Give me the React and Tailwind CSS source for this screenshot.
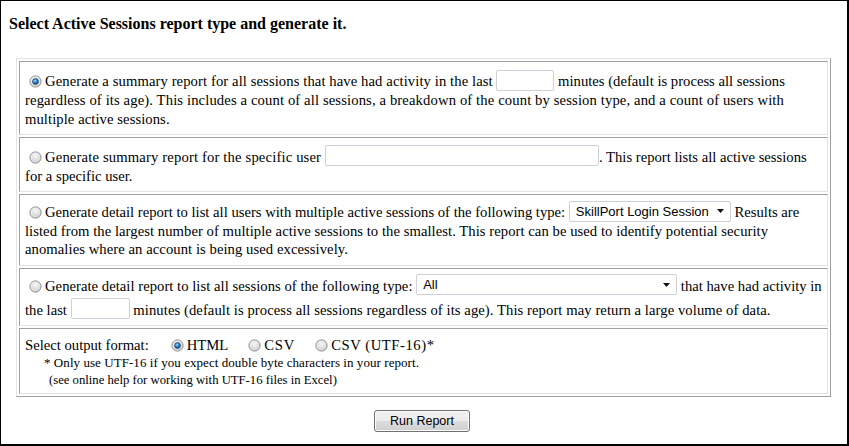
import React from "react";

function Radio({ checked, className }) {
  return (
    <svg width="13" height="13" viewBox="0 0 13 13" className={className}>
      <defs>
        <radialGradient id="rgFill" cx="0.4" cy="0.35" r="0.75">
          <stop offset="0%" stopColor="#ffffff" />
          <stop offset="55%" stopColor="#e9e9e9" />
          <stop offset="100%" stopColor="#c9c9c9" />
        </radialGradient>
        <radialGradient id="rgIn" cx="0.5" cy="0.3" r="0.8">
          <stop offset="0%" stopColor="#f7f7f7" />
          <stop offset="100%" stopColor="#d2d2d2" />
        </radialGradient>
        <radialGradient id="rgDot" cx="0.4" cy="0.35" r="0.7">
          <stop offset="0%" stopColor="#9fdcff" />
          <stop offset="50%" stopColor="#2d86d2" />
          <stop offset="100%" stopColor="#154a86" />
        </radialGradient>
      </defs>
      <circle cx="6.5" cy="6.5" r="5.6" fill="url(#rgFill)" stroke="#8d8d8d" strokeWidth="1" />
      <circle cx="6.5" cy="6.5" r="3.9" fill="url(#rgIn)" />
      {checked && (
        <circle cx="6.5" cy="6.5" r="2.9" fill="url(#rgDot)" stroke="#1d3f69" strokeWidth="0.8" />
      )}
    </svg>
  );
}

function Select({ label, w }) {
  return (
    <span
      className={
        "inline-flex items-center justify-between h-[21px] mb-[3px] border border-[#cdd1d8] rounded-[2px] bg-white pl-[6px] pr-[6px] font-['Liberation_Sans',Arial,sans-serif] text-[13px] leading-[15px] text-black shrink-0 " +
        w
      }
    >
      <span>{label}</span>
      <svg width="7" height="4" viewBox="0 0 7 4">
        <path d="M0 0 L7 0 L3.5 4 Z" fill="#111" />
      </svg>
    </span>
  );
}

function TextBox({ w }) {
  return (
    <input
      type="text"
      readOnly
      className={
        "h-[21px] mb-[3px] border border-[#cdd1d8] rounded-[2px] bg-white shrink-0 outline-none " + w
      }
    />
  );
}

const cell =
  "border border-[#e3e3e3] border-t-[#a0a0a0] border-l-[#a0a0a0] pl-[5px] pr-[5px]";
const line = "flex items-center whitespace-pre";

export default function App() {
  return (
    <div className="w-[849px] h-[446px] bg-white border-l border-t border-r-2 border-b-2 border-black font-['Liberation_Serif','Times_New_Roman',serif] text-black overflow-hidden">
      <div className="pt-[13px] pl-[8px] h-[32px] text-[16px] font-bold leading-[19px]">
        Select Active Sessions report type and generate it.
      </div>

      <div className="ml-[15px] mt-[25px] w-[815px] border border-[#a0a0a0] border-t-[#e3e3e3] border-l-[#e3e3e3] p-[2px] flex flex-col gap-[2px] text-[14.67px] leading-[19px]">
        {/* Row 1 */}
        <div className={cell + " h-[74px] pt-[10px]"}>
          <div className={line + " h-[19px]"}>
            <Radio checked className="shrink-0 ml-[4px] mr-[3px]" />
            <span className="tracking-[0.09px]">
              {"Generate a summary report for all sessions that have had activity in the last "}
            </span>
            <TextBox w="w-[58px]" />
            {" minutes (default is process all sessions"}
          </div>
          <div className={line + " h-[19px] tracking-[0.12px]"}>
            regardless of its age). This includes a count of all sessions, a breakdown of the count by session type, and a count of users with
          </div>
          <div className={line + " h-[19px] tracking-[0.07px]"}>multiple active sessions.</div>
        </div>

        {/* Row 2 */}
        <div className={cell + " h-[55px] pt-[9px]"}>
          <div className={line + " h-[20px]"}>
            <Radio className="shrink-0 ml-[4px] mr-[3px]" />
            <span className="tracking-[0.15px]">{"Generate summary report for the specific user "}</span>
            <TextBox w="w-[274px]" />
            {". This report lists all active sessions"}
          </div>
          <div className={line + " h-[19px]"}>for a specific user.</div>
        </div>

        {/* Row 3 */}
        <div className={cell + " h-[72px] pt-[8px]"}>
          <div className={line + " h-[19px]"}>
            <Radio className="shrink-0 ml-[4px] mr-[3px]" />
            {"Generate detail report to list all users with multiple active sessions of the following type: "}
            <Select label="SkillPort Login Session" w="w-[162px]" />
            {" Results are"}
          </div>
          <div className={line + " h-[18px] tracking-[0.05px]"}>
            listed from the largest number of multiple active sessions to the smallest. This report can be used to identify potential security
          </div>
          <div className={line + " h-[19px] tracking-[0.06px]"}>anomalies where an account is being used excessively.</div>
        </div>

        {/* Row 4 */}
        <div className={cell + " h-[58px] pt-[5px]"}>
          <div className={line + " h-[24px]"}>
            <Radio className="shrink-0 ml-[4px] mr-[3px]" />
            <span className="tracking-[0.03px]">
              {"Generate detail report to list all sessions of the following type: "}
            </span>
            <Select label="All" w="w-[261px]" />
            {" that have had activity in"}
          </div>
          <div className={line + " h-[24px]"}>
            {"the last "}
            <TextBox w="w-[59px]" />
            <span className="tracking-[0.07px]">
              {" minutes (default is process all sessions regardless of its age). This report may return a large volume of data."}
            </span>
          </div>
        </div>

        {/* Row 5 */}
        <div className={cell + " h-[66px] pt-[8px]"}>
          <div className={line + " h-[17px]"}>
            {"Select output format:"}
            <Radio checked className="shrink-0 ml-[22px] mr-[3px]" />
            {"HTML"}
            <Radio className="shrink-0 ml-[20px] mr-[3px]" />
            <span className="tracking-[0.8px]">CSV</span>
            <Radio className="shrink-0 ml-[20px] mr-[3px]" />
            <span className="tracking-[0.55px]">CSV (UTF-16)*</span>
          </div>
          <div className={line + " h-[17px] pl-[19px] text-[13px] tracking-[0.06px]"}>
            * Only use UTF-16 if you expect double byte characters in your report.
          </div>
          <div className={line + " h-[18px] pl-[24px] text-[12.7px]"}>
            (see online help for working with UTF-16 files in Excel)
          </div>
        </div>
      </div>

      <div className="flex justify-center mt-[13px] pr-[4px]">
        <button className="w-[96px] h-[22px] border border-[#707070] rounded-[3px] bg-[linear-gradient(to_bottom,#f2f2f2_0%,#ebebeb_50%,#dddddd_51%,#cfcfcf_100%)] shadow-[inset_0_0_0_1px_#fcfcfc] font-['Liberation_Sans',Arial,sans-serif] text-[12.5px] leading-[14px] text-black">
          Run Report
        </button>
      </div>
    </div>
  );
}
